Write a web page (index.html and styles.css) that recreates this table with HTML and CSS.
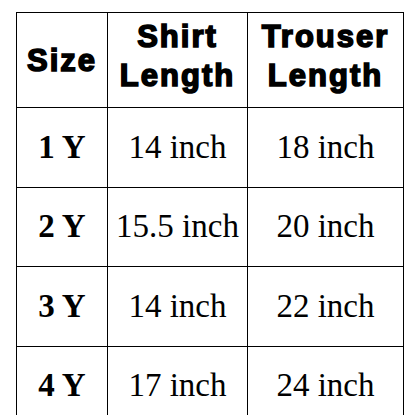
FILE: index.html
```html
<!DOCTYPE html>
<html>
<head>
<meta charset="utf-8">
<link rel="stylesheet" href="styles.css">
</head>
<body>
<table class="size-table">
  <colgroup>
    <col class="c1"><col class="c2"><col class="c3">
  </colgroup>
  <thead>
    <tr class="head-row">
      <th>Size</th>
      <th class="two">Shirt<br>Length</th>
      <th class="two">Trouser<br>Length</th>
    </tr>
  </thead>
  <tbody>
    <tr><td class="sz">1 Y</td><td>14 inch</td><td>18 inch</td></tr>
    <tr><td class="sz">2 Y</td><td>15.5 inch</td><td>20 inch</td></tr>
    <tr><td class="sz">3 Y</td><td>14 inch</td><td>22 inch</td></tr>
    <tr><td class="sz">4 Y</td><td>17 inch</td><td>24 inch</td></tr>
  </tbody>
</table>
</body>
</html>
```
FILE: styles.css
```css
html, body {
  margin: 0;
  padding: 0;
  background: #ffffff;
}
body {
  padding: 12px 0 0 16px;
  overflow: hidden;
  height: 415px;
  box-sizing: border-box;
}
.size-table {
  border-collapse: collapse;
  table-layout: fixed;
  width: 387px;
  color: #000;
}
.c1 { width: 91px; }
.c2 { width: 140px; }
.c3 { width: 156px; }
.size-table th,
.size-table td {
  border: 1px solid #000;
  padding: 0;
  text-align: center;
  vertical-align: middle;
}
.size-table th {
  font-family: "Liberation Sans", Arial, sans-serif;
  font-weight: 700;
  font-size: 31px;
  line-height: 39px;
  letter-spacing: 2px;
  -webkit-text-stroke: 1.6px #000;
  height: 94px;
}
.size-table th.two {
  padding-bottom: 8px;
  height: 86px;
}
.size-table td {
  font-family: "Liberation Serif", "Times New Roman", serif;
  font-size: 33px;
  height: 78.5px;
}
.size-table td.sz {
  font-weight: 700;
}
```
